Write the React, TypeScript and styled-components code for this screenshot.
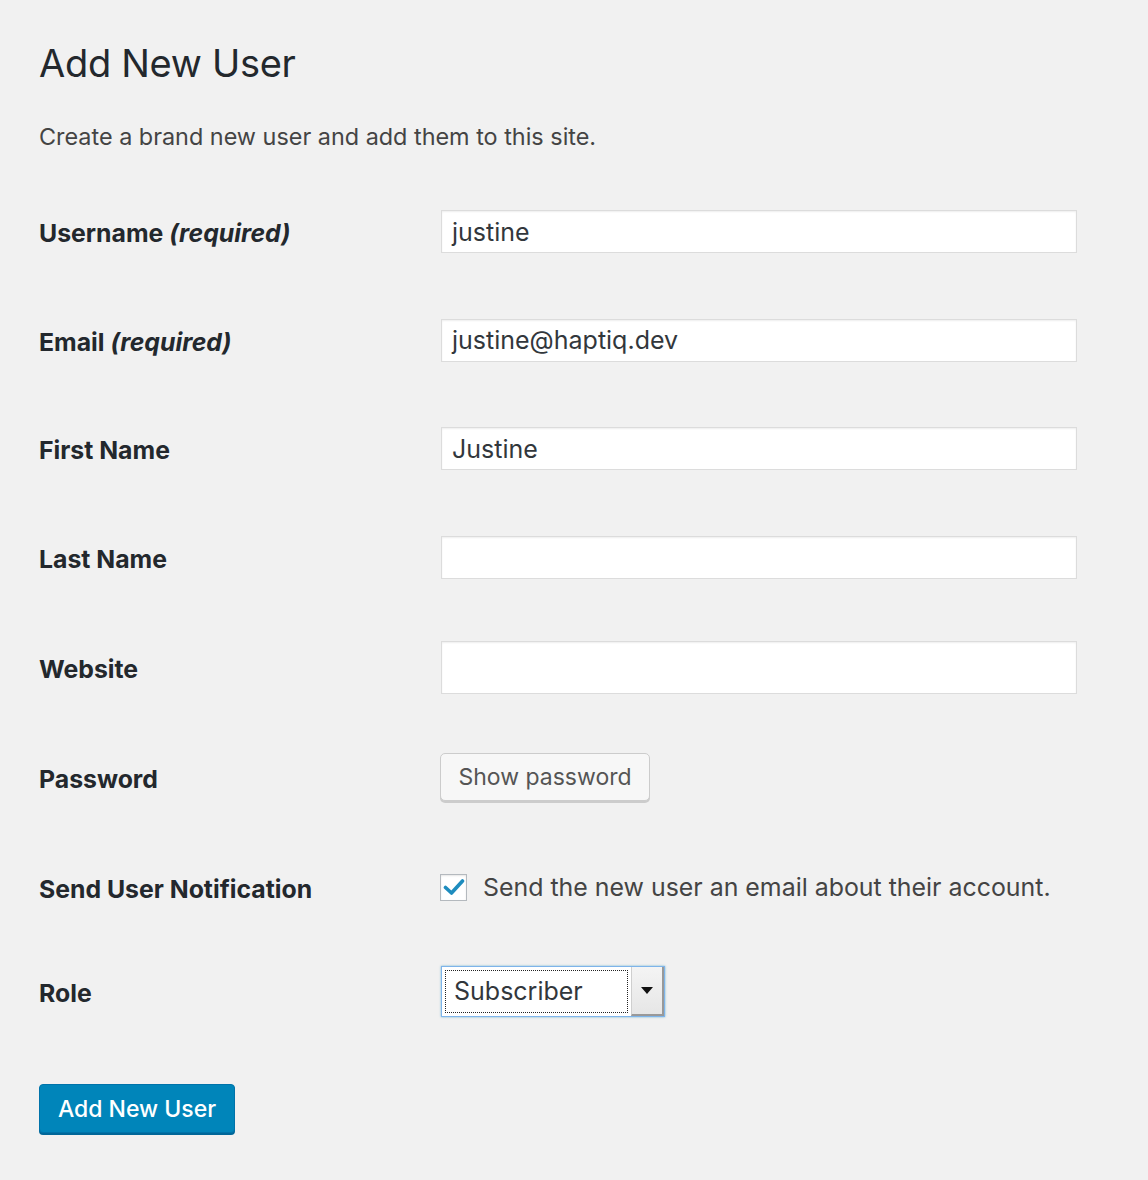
import styled, { createGlobalStyle } from "styled-components";

const GlobalStyle = createGlobalStyle`
  html, body {
    margin: 0;
    padding: 0;
    background: #f1f1f1;
  }
  body {
    font-family: Inter, "Noto Sans", "Liberation Sans", sans-serif;
    color: #444;
  }
`;

type Row = {
  label: string;
  required?: boolean;
  height: number;
  kind: "text" | "password" | "notify" | "role";
  value?: string;
  tall?: boolean;
};

const rows: Row[] = [
  { label: "Username", required: true, height: 109, kind: "text", value: "justine" },
  { label: "Email", required: true, height: 108, kind: "text", value: "justine@haptiq.dev" },
  { label: "First Name", height: 109, kind: "text", value: "Justine" },
  { label: "Last Name", height: 109, kind: "text", value: "" },
  { label: "Website", height: 110, kind: "text", value: "", tall: true },
  { label: "Password", height: 111, kind: "password" },
  { label: "Send User Notification", height: 108, kind: "notify" },
  { label: "Role", height: 100, kind: "role" },
];

const App = () => {
  return (
    <>
      <GlobalStyle />
      <Wrap>
        <Title>Add New User</Title>
        <Intro>Create a brand new user and add them to this site.</Intro>
        <Form>
          {rows.map((row) => (
            <FormRow key={row.label} $h={row.height}>
              <Label>
                {row.label}
                {row.required && <Req> (required)</Req>}
              </Label>
              <Field>
                {row.kind === "text" && (
                  <TextInput $tall={row.tall}>{row.value}</TextInput>
                )}
                {row.kind === "password" && (
                  <SecondaryButton>Show password</SecondaryButton>
                )}
                {row.kind === "notify" && (
                  <CheckLine>
                    <CheckBox>
                      <svg width="22" height="18" viewBox="0 0 22 18">
                        <path
                          d="M2.5 9.5 L8.5 15 L19.5 3"
                          fill="none"
                          stroke="#1e8cbe"
                          strokeWidth="3.6"
                          strokeLinecap="round"
                          strokeLinejoin="round"
                        />
                      </svg>
                    </CheckBox>
                    <CheckText>
                      Send the new user an email about their account.
                    </CheckText>
                  </CheckLine>
                )}
                {row.kind === "role" && (
                  <Select>
                    <SelectValue>
                      <FocusRing>Subscriber</FocusRing>
                    </SelectValue>
                    <SelectArrow>
                      <svg width="12" height="7" viewBox="0 0 12 7">
                        <path d="M0 0 H12 L6 7 Z" fill="#111" />
                      </svg>
                    </SelectArrow>
                  </Select>
                )}
              </Field>
            </FormRow>
          ))}
        </Form>
        <PrimaryButton>Add New User</PrimaryButton>
      </Wrap>
    </>
  );
};

const Wrap = styled.div`
  padding: 38px 40px 40px 40px;
  min-height: 1180px;
  box-sizing: border-box;
`;

const Title = styled.h1`
  margin: 0 0 0 -1px;
  font-size: 38px;
  font-weight: 400;
  line-height: 50px;
  color: #23282d;
  letter-spacing: -0.3px;
`;

const Intro = styled.p`
  margin: 34px 0 0 -1px;
  font-size: 23.4px;
  line-height: 30px;
  color: #444;
`;

const Form = styled.div`
  margin-top: 25px;
  display: flex;
  flex-direction: column;
`;

const FormRow = styled.div<{ $h: number }>`
  display: grid;
  grid-template-columns: 401px 636px;
  align-items: center;
  height: ${(p) => p.$h}px;
`;

const Label = styled.div`
  font-size: 24.8px;
  font-weight: 700;
  color: #23282d;
  padding-top: 3px;
  margin-left: -1px;
`;

const Req = styled.em`
  font-style: italic;
  font-weight: 700;
`;

const Field = styled.div`
  display: flex;
  align-items: center;
`;

const TextInput = styled.div<{ $tall?: boolean }>`
  box-sizing: border-box;
  width: 636px;
  height: ${(p) => (p.$tall ? 53 : 43)}px;
  padding: 0 10px;
  display: flex;
  align-items: center;
  background: #fff;
  border: 1px solid #dcdcdc;
  box-shadow: inset 0 1px 2px rgba(0, 0, 0, 0.07);
  font-size: 25px;
  color: #32373c;
`;

const SecondaryButton = styled.button`
  box-sizing: border-box;
  margin-left: -1px;
  width: 210px;
  height: 48px;
  margin-bottom: 2px;
  padding: 0;
  background: #f7f7f7;
  border: 1px solid #ccc;
  border-radius: 5px;
  box-shadow: 0 2px 0 #ccc;
  font-family: inherit;
  font-size: 23px;
  color: #555;
  cursor: pointer;
`;

const CheckLine = styled.div`
  display: flex;
  align-items: center;
  gap: 16px;
  margin-left: -1px;
`;

const CheckBox = styled.span`
  box-sizing: border-box;
  width: 27px;
  height: 27px;
  display: flex;
  align-items: center;
  justify-content: center;
  background: #fff;
  border: 1px solid #b4b9be;
  box-shadow: inset 0 1px 2px rgba(0, 0, 0, 0.1);
`;

const CheckText = styled.span`
  font-size: 24.9px;
  color: #444;
`;

const Select = styled.div`
  box-sizing: border-box;
  width: 224px;
  height: 51px;
  display: flex;
  border: 1px solid #7eb4ea;
  box-shadow: 0 0 2px rgba(30, 140, 190, 0.6);
  background: #fff;
`;

const SelectValue = styled.div`
  flex: 1;
  padding: 3px;
  display: flex;
`;

const FocusRing = styled.div`
  flex: 1;
  display: flex;
  align-items: center;
  padding-left: 8px;
  border: 1px dotted #222;
  font-size: 25px;
  color: #32373c;
`;

const SelectArrow = styled.div`
  width: 33px;
  display: flex;
  align-items: center;
  justify-content: center;
  background: linear-gradient(#f4f4f4, #e6e6e6);
  border-left: 1px solid #cfcfcf;
  border-right: 2px solid #999;
  border-bottom: 2px solid #999;
  box-sizing: border-box;
`;

const PrimaryButton = styled.button`
  margin-top: 43px;
  margin-left: -1px;
  box-sizing: border-box;
  width: 196px;
  height: 49px;
  padding: 0;
  background: #0085ba;
  border: 1px solid #0073aa;
  border-radius: 4px;
  box-shadow: 0 2px 0 #006799;
  font-family: inherit;
  font-size: 23px;
  font-weight: 500;
  color: #fff;
  cursor: pointer;
`;

export default App;
